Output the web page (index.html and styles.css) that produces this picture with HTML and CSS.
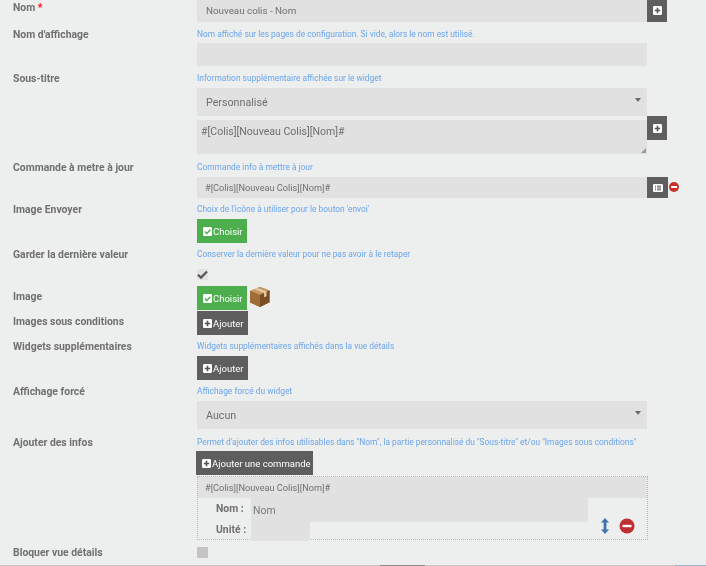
FILE: index.html
```html
<!DOCTYPE html>
<html lang="fr">
<head>
<meta charset="utf-8">
<title>Nouveau colis</title>
<link rel="stylesheet" href="styles.css">
</head>
<body>
<form class="form">
  <div class="row row-nom">
    <div class="label label-nom">Nom <span class="req">*</span></div>
    <div class="field">
      <div class="line">
        <div class="input h23">Nouveau colis - Nom</div>
        <div class="addon a23"><svg class="ico" viewBox="0 0 10 10"><rect width="10" height="10" rx="1.5" fill="#fff"/><path d="M5 2v6M2 5h6" stroke="#555" stroke-width="1.8"/></svg></div>
      </div>
    </div>
  </div>

  <div class="row row-aff">
    <div class="label">Nom d'affichage</div>
    <div class="field">
      <div class="hint hint-2">Nom affiché sur les pages de configuration. Si vide, alors le nom est utilisé.</div>
      <div class="input h23"></div>
    </div>
  </div>

  <div class="row row-sous">
    <div class="label">Sous-titre</div>
    <div class="field">
      <div class="hint">Information supplémentaire affichée sur le widget</div>
      <div class="select h28 gap-b">Personnalisé<span class="caret"></span></div>
      <div class="line">
        <div class="textarea">#[Colis][Nouveau Colis][Nom]#<svg class="grip" viewBox="0 0 6 6"><path d="M6 0v6H0z" fill="#9a9a9a"/></svg></div>
        <div class="addon a24"><svg class="ico" viewBox="0 0 10 10"><rect width="10" height="10" rx="1.5" fill="#fff"/><path d="M5 2v6M2 5h6" stroke="#555" stroke-width="1.8"/></svg></div>
      </div>
    </div>
  </div>

  <div class="row row-cmd">
    <div class="label">Commande à metre à jour</div>
    <div class="field">
      <div class="hint">Commande info à mettre à jour</div>
      <div class="line">
        <div class="input h21 small">#[Colis][Nouveau Colis][Nom]#</div>
        <div class="addon a21 w21"><svg class="ico-list" viewBox="0 0 10 8"><rect width="10" height="8" rx="1.2" fill="#fff"/><path d="M2 2.200h1M4 2.200h4M2 4h1M4 4h4M2 5.800h1M4 5.800h4" stroke="#555" stroke-width="1"/></svg></div>
        <svg class="minus-s" viewBox="0 0 10 10"><circle cx="5" cy="5" r="5" fill="#c9302c"/><rect x="2" y="4" width="6" height="2" fill="#fff"/></svg>
      </div>
    </div>
  </div>

  <div class="row row-env">
    <div class="label">Image Envoyer</div>
    <div class="field">
      <div class="hint">Choix de l'icône à utiliser pour le bouton 'envoi'</div>
      <div class="btn green"><svg class="bi" viewBox="0 0 10 10"><rect width="10" height="10" rx="1.5" fill="#fff"/><path d="M2 5l2.200 2.200L8.200 3" fill="none" stroke="#4cae4c" stroke-width="1.500"/></svg>Choisir</div>
    </div>
  </div>

  <div class="row row-gar">
    <div class="label">Garder la dernière valeur</div>
    <div class="field">
      <div class="hint">Conserver la dernière valeur pour ne pas avoir à le retaper</div>
      <div class="check"><svg viewBox="0 0 11 11"><path d="M1 5.800l3 2.800L10 2.500" fill="none" stroke="#555" stroke-width="2.200"/></svg></div>
    </div>
  </div>

  <div class="row row-img">
    <div class="label label-btn">Image</div>
    <div class="field">
      <div class="line">
        <div class="btn green"><svg class="bi" viewBox="0 0 10 10"><rect width="10" height="10" rx="1.5" fill="#fff"/><path d="M2 5l2.200 2.200L8.200 3" fill="none" stroke="#4cae4c" stroke-width="1.500"/></svg>Choisir</div>
        <svg class="box" viewBox="0 0 22 22">
          <path d="M11 1l9.500 3.600v11.600L11 21 1.200 16.400V5z" fill="#8a5a2c"/>
          <path d="M1.200 5L11 1l9.500 3.600L11 9z" fill="#c99a64"/>
          <path d="M11 9l9.500-4.400v11.600L11 21z" fill="#7a4c22"/>
          <path d="M1.200 5L11 9v12L1.200 16.400z" fill="#a06c38"/>
          <path d="M5.500 3.200l9.600 3.600v4.400l2.400-1V5.600L8 2.100z" fill="#e4ceaa"/>
        </svg>
      </div>
    </div>
  </div>

  <div class="row row-cond">
    <div class="label label-btn">Images sous conditions</div>
    <div class="field">
      <div class="btn dark"><svg class="bi" viewBox="0 0 10 10"><rect width="10" height="10" rx="1.5" fill="#fff"/><path d="M5 2v6M2 5h6" stroke="#555" stroke-width="1.800"/></svg>Ajouter</div>
    </div>
  </div>

  <div class="row row-wid">
    <div class="label">Widgets supplémentaires</div>
    <div class="field">
      <div class="hint">Widgets supplémentaires affichés dans la vue détails</div>
      <div class="btn dark"><svg class="bi" viewBox="0 0 10 10"><rect width="10" height="10" rx="1.5" fill="#fff"/><path d="M5 2v6M2 5h6" stroke="#555" stroke-width="1.800"/></svg>Ajouter</div>
    </div>
  </div>

  <div class="row row-for">
    <div class="label">Affichage forcé</div>
    <div class="field">
      <div class="hint">Affichage forcé du widget</div>
      <div class="select h28">Aucun<span class="caret"></span></div>
    </div>
  </div>

  <div class="row row-inf">
    <div class="label">Ajouter des infos</div>
    <div class="field">
      <div class="hint hint-2">Permet d'ajouter des infos utilisables dans "Nom", la partie personnalisé du "Sous-titre" et/ou "Images sous conditions"</div>
      <div class="btn dark cmd"><svg class="bi" viewBox="0 0 10 10"><rect width="10" height="10" rx="1.5" fill="#fff"/><path d="M5 2v6M2 5h6" stroke="#555" stroke-width="1.800"/></svg>Ajouter une commande</div>
      <div class="panel">
        <div class="panel-head">#[Colis][Nouveau Colis][Nom]#</div>
        <div class="panel-body">
          <div class="panel-labels">
            <div class="pl-nom">Nom :</div>
            <div class="pl-uni">Unité :</div>
          </div>
          <div class="panel-inputs">
            <div class="pi-nom">Nom</div>
            <div class="pi-uni"></div>
          </div>
          <div class="panel-actions">
            <svg class="arrows" viewBox="0 0 10 16"><path d="M5 0l4 4.500H6.400v7H9L5 16l-4-4.500h2.600v-7H1z" fill="#3f74b0"/></svg>
            <svg class="minus-l" viewBox="0 0 16 16"><circle cx="8" cy="8" r="7.500" fill="#bf2f34"/><rect x="3.500" y="6.800" width="9" height="2.400" fill="#fff"/></svg>
          </div>
        </div>
      </div>
    </div>
  </div>

  <div class="row">
    <div class="label">Bloquer vue détails</div>
    <div class="field"><div class="check off"></div></div>
  </div>
</form>
<div class="strip"></div>
</body>
</html>
```

FILE: styles.css
```css
* { box-sizing: border-box; }
html, body { margin: 0; padding: 0; height: 566px; overflow: hidden; background: #edeeee; }
body { font-family: Roboto, "Liberation Sans", sans-serif; color: #666; position: relative; filter: blur(0.45px); }
.form { display: flex; flex-direction: column; margin-top: -1px; }
.row { display: grid; grid-template-columns: 197px 1fr; }
.label { padding: 1px 0 0 13px; font-size: 10.400px; font-weight: 700; line-height: 14px; color: #707070; }
.label-nom { padding-top: 2px; }
.label-btn { padding-top: 4px; }
.req { color: #f00; }
.field { min-width: 0; }
.hint { font-size: 8.400px; line-height: 15px; color: #6ba6ee; height: 14px; white-space: nowrap; margin-bottom: 3px; }
.hint-2 { margin-bottom: 2px; }
.line { display: flex; align-items: flex-start; }
.input, .select, .textarea { background: #e0e1e0; color: #6f6f6f; width: 450px; }
.input { font-size: 9.800px; padding-left: 9px; display: flex; align-items: center; }
.h23 { height: 23px; }
.h21 { height: 21px; }
.small { font-size: 9.200px; padding-left: 8px; }
.select { position: relative; font-size: 10.700px; padding-left: 9px; display: flex; align-items: center; }
.h28 { height: 28px; }
.gap-b { margin-bottom: 4px; }
.caret { position: absolute; right: 6px; top: 10px; border: 3.500px solid transparent; border-top: 4px solid #6b6b6b; border-bottom: 0; width: 0; height: 0; }
.textarea { position: relative; height: 34px; font-size: 10.550px; padding: 5px 0 0 4px; }
.grip { position: absolute; right: 1px; bottom: 1px; width: 5px; height: 5px; }
.addon { width: 20px; background: #5e5e5e; display: flex; align-items: center; justify-content: center; flex: none; }
.a23 { height: 23px; }
.a24 { height: 24px; margin-top: -4px; }
.a21 { height: 21px; }
.w21 { width: 21px; }
.ico { width: 9px; height: 9px; }
.ico-list { width: 10px; height: 8px; }
.minus-s { flex: none; width: 10px; height: 10px; margin: 5px 0 0 1px; }
.btn { display: flex; align-items: center; height: 24px; font-size: 9.500px; color: #fff; padding-left: 6px; white-space: nowrap; }
.green { width: 50px; background: #4cae4c; }
.dark { width: 51px; background: #5e5e5e; }
.cmd { width: 117px; margin: 0 0 1px -1px; }
.bi { width: 9px; height: 9px; margin-right: 1px; flex: none; }
.check { width: 11px; height: 11px; background: #e2e2e2; margin-top: 8px; }
.check svg { display: block; width: 11px; height: 11px; }
.check.off { background: #c4c4c4; margin-top: 2px; }
.box { width: 22px; height: 22px; margin-left: 2px; flex: none; }
.panel { width: 451px; height: 64px; border: 1px dotted #b5b5b5; }
.panel-head { height: 21px; background: #e0e1e0; font-size: 9.200px; line-height: 21px; padding-left: 7px; color: #6f6f6f; }
.panel-body { display: flex; height: 41px; }
.panel-labels { width: 53px; flex: none; padding-left: 18px; font-size: 10.400px; font-weight: 700; color: #707070; line-height: 14px; }
.pl-nom { margin-top: 4px; }
.pl-uni { margin-top: 7px; }
.panel-inputs { width: 337px; flex: none; }
.pi-nom { height: 24px; background: #e0e1e0; font-size: 10.500px; line-height: 25px; padding-left: 2px; color: #7a7a7a; }
.pi-uni { width: 59px; height: 19px; background: #e0e1e0; }
.panel-actions { display: flex; align-items: flex-start; padding: 20px 0 0 12px; }
.arrows { width: 10px; height: 16px; }
.minus-l { width: 16px; height: 16px; margin-left: 9px; }
.strip { position: absolute; left: 0; right: 0; bottom: 0; height: 1px; background: linear-gradient(to right, #c8c4c4 0 380px, #8a8a8a 380px 425px, #c8c8c8 425px 675px, #9fb3c6 675px); }

.row-nom { height: 28px; }
.row-aff { height: 44px; }
.row-sous { height: 89px; }
.row-cmd { height: 42px; }
.row-env { height: 45px; }
.row-gar { height: 39px; }
.row-img { height: 25px; }
.row-cond { height: 28px; }
.row-wid { height: 45px; }
.row-for { height: 51px; }
.row-inf { height: 110px; }
```
